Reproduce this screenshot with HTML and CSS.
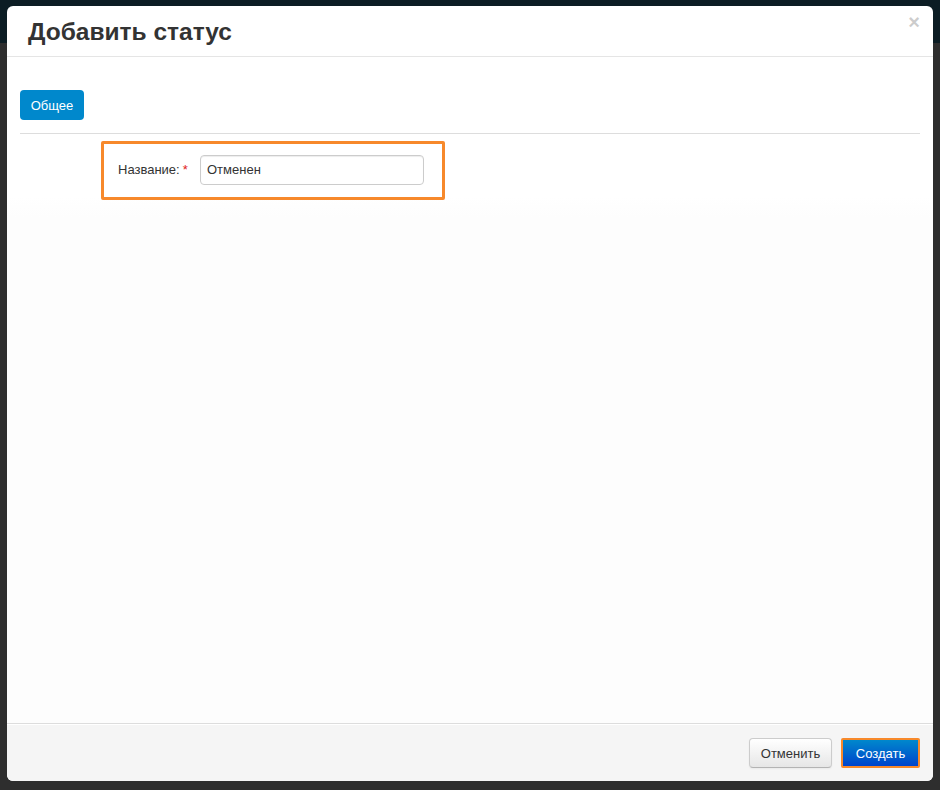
FILE: index.html
```html
<!DOCTYPE html>
<html lang="ru">
<head>
<meta charset="utf-8">
<title>Добавить статус</title>
<link rel="stylesheet" href="styles.css">
</head>
<body>
<div class="backdrop">
  <div class="modal">
    <div class="modal-header">
      <h3 class="modal-title">Добавить статус</h3>
      <span class="close">×</span>
    </div>
    <div class="modal-body">
      <div class="tabs">
        <button class="tab active">Общее</button>
      </div>
      <div class="tab-pane">
        <div class="form-group highlight">
          <label class="form-label">Название:<span class="req">*</span></label>
          <input class="form-input" type="text" value="Отменен">
        </div>
      </div>
    </div>
    <div class="modal-footer">
      <button class="btn btn-default">Отменить</button>
      <button class="btn btn-primary">Создать</button>
    </div>
  </div>
</div>
</body>
</html>
```
FILE: styles.css
```css
html, body {
  margin: 0;
  padding: 0;
  height: 100%;
}
body {
  font-family: "Liberation Sans", Arial, sans-serif;
  color: #333;
  background: linear-gradient(#0c1d24 0, #0c1d24 43px, #2e2e2e 43px, #2e2e2e 100%);
}
.backdrop {
  height: 790px;
  padding: 6px 7px 9px 7px;
  box-sizing: border-box;
}
.modal {
  height: 775px;
  background: #fff;
  border-radius: 6px;
  display: flex;
  flex-direction: column;
  overflow: hidden;
}
.modal-header {
  height: 50px;
  border-bottom: 1px solid #e5e5e5;
  display: flex;
  align-items: flex-start;
  justify-content: space-between;
  padding: 0 11px 0 21px;
  box-sizing: content-box;
}
.modal-title {
  margin: 11px 0 0 0;
  font-size: 24.5px;
  line-height: 30px;
  font-weight: bold;
  color: #333;
}
.close {
  margin-top: 6px;
  margin-right: 2px;
  font-size: 20px;
  font-weight: bold;
  line-height: 20px;
  color: #000;
  opacity: 0.2;
}
.modal-body {
  flex: 1;
  padding: 33px 13px 0 13px;
  background: linear-gradient(#fff 0, #fff 140px, #fdfdfd 160px);
}
.tabs {
  border-bottom: 1px solid #ddd;
  padding-bottom: 13px;
}
.tab {
  height: 30px;
  width: 64px;
  border: none;
  border-radius: 4px;
  background: #0088cc;
  color: #fff;
  font-family: "Liberation Sans", Arial, sans-serif;
  font-size: 13px;
  padding: 0;
  display: block;
}
.tab-pane {
  padding: 7px 0 0 81px;
}
.form-group.highlight {
  width: 344px;
  height: 59px;
  box-sizing: border-box;
  border: 3px solid #f7892b;
  border-radius: 2px;
  display: flex;
  align-items: center;
  padding: 0 17px 2px 14px;
}
.form-label {
  width: 82px;
  font-size: 13px;
  color: #333;
}
.req {
  color: #e02020;
  margin-left: 3px;
}
.form-input {
  width: 224px;
  height: 30px;
  box-sizing: border-box;
  border: 1px solid #ccc;
  border-radius: 4px;
  padding: 4px 6px;
  font-family: "Liberation Sans", Arial, sans-serif;
  font-size: 13px;
  color: #333;
  box-shadow: inset 0 1px 1px rgba(0,0,0,0.075);
}
.modal-footer {
  height: 58px;
  border-top: 1px solid #ddd;
  background: #f5f5f5;
  display: flex;
  justify-content: flex-end;
  align-items: flex-start;
  padding: 14px 13px 0 0;
  box-sizing: border-box;
  gap: 9px;
  box-shadow: inset 0 1px 0 #fff;
}
.btn {
  height: 30px;
  border-radius: 4px;
  font-family: "Liberation Sans", Arial, sans-serif;
  font-size: 13px;
  padding: 0;
}
.btn-default {
  width: 83px;
  border: 1px solid #ccc;
  border-bottom-color: #b3b3b3;
  background: linear-gradient(#ffffff, #e6e6e6);
  color: #333;
  box-shadow: inset 0 1px 0 rgba(255,255,255,.2), 0 1px 2px rgba(0,0,0,.05);
}
.btn-primary {
  width: 79px;
  border: 2px solid #f7892b;
  border-radius: 2px;
  background: linear-gradient(#0088cc, #0044cc);
  color: #fff;
}
```
